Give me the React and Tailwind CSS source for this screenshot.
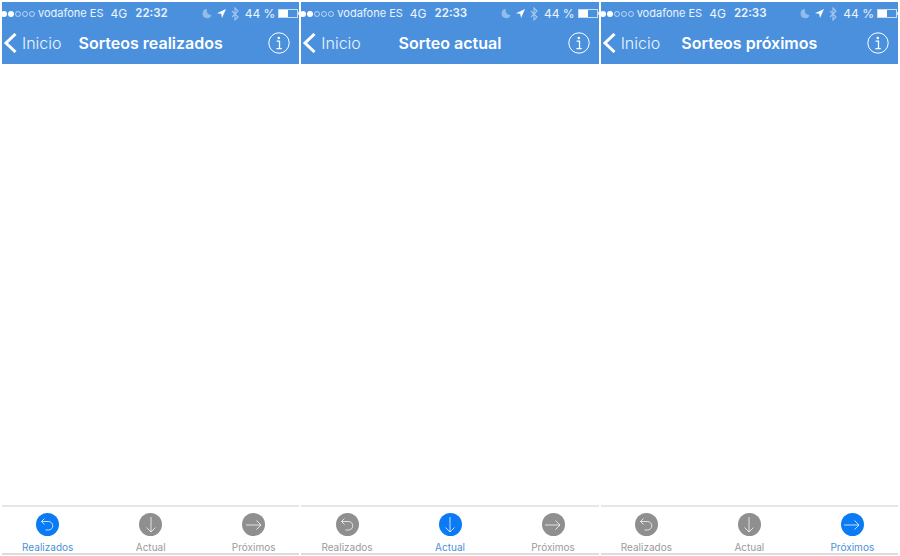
import { useState } from 'react';

const PANELS = [
  { title: 'Sorteos realizados', time: '22:32', active: 'Realizados' },
  { title: 'Sorteo actual', time: '22:33', active: 'Actual' },
  { title: 'Sorteos próximos', time: '22:33', active: 'Próximos' },
];

function Dots() {
  return (
    <div className="flex items-center gap-[1px] -ml-[1px]">
      {[true, true, false, false, false].map((filled, i) => (
        <span
          key={i}
          className={
            filled
              ? 'h-[6px] w-[6px] rounded-full bg-white'
              : 'h-[6px] w-[6px] rounded-full border border-white/60'
          }
        />
      ))}
    </div>
  );
}

function StatusBar({ time }) {
  return (
    <div className="flex h-[22px] items-center justify-between pt-[1px] text-white/90">
      <div className="flex items-center text-[11px]">
        <Dots />
        <span className="ml-[3px] whitespace-nowrap">vodafone ES</span>
        <span className="ml-[7px] text-[12px]">4G</span>
        <span className="ml-[8px] text-[11.5px] font-semibold">{time}</span>
      </div>
      <div className="flex items-center text-[12px]">
        <svg width="10" height="11" viewBox="0 0 10 11" className="opacity-40">
          <path d="M5 1a4.6 4.6 0 1 0 4.5 6A4.4 4.4 0 0 1 5 1z" fill="white" />
        </svg>
        <svg width="9" height="9" viewBox="0 0 9 9" className="ml-[5px]">
          <path d="M9 0 0 4.2l4.2.6L5 9z" fill="white" />
        </svg>
        <svg width="8" height="14" viewBox="0 0 8 14" className="ml-[5px] opacity-50">
          <path d="M1 4l6 6-3 3V1l3 3-6 6" fill="none" stroke="white" strokeWidth="1.1" />
        </svg>
        <span className="ml-[6px] whitespace-nowrap">44 %</span>
        <div className="ml-[3px] flex h-[9px] w-[20px] border border-white/70">
          <div className="h-full w-[9px] bg-white" />
        </div>
        <div className="h-[3px] w-[1px] bg-white/70" />
      </div>
    </div>
  );
}

function NavBar({ title }) {
  return (
    <div className="grid h-[40px] grid-cols-[1fr_auto_1fr] items-center pb-[3px]">
      <div className="flex items-center text-white">
        <svg width="15" height="20" viewBox="0 0 15 20" className="ml-[1px]">
          <path d="M12.5 1 3 10l9.5 9" fill="none" stroke="white" strokeWidth="3" />
        </svg>
        <span className="ml-[4px] text-[16px] font-light text-white/90">Inicio</span>
      </div>
      <span className="text-[16px] font-semibold text-white">{title}</span>
      <div className="flex justify-end pr-[9px]">
        <svg width="22" height="22" viewBox="0 0 22 22">
          <circle cx="11" cy="11" r="10.2" fill="none" stroke="white" strokeWidth="1" />
          <circle cx="10.8" cy="6" r="1.3" fill="white" />
          <path d="M8.6 9.2h2.9v7.2M8.4 16.6h5.4" fill="none" stroke="white" strokeWidth="1.3" />
        </svg>
      </div>
    </div>
  );
}

function TabIcon({ name }) {
  if (name === 'Realizados') {
    return (
      <svg width="15" height="15" viewBox="0 0 15 15">
        <path
          d="M4.5 1.5 1.5 4.5l3 3M1.5 4.5h7a4.2 4.2 0 0 1 0 8.5H5.5"
          fill="none"
          stroke="white"
          strokeOpacity="0.75"
          strokeWidth="1"
        />
      </svg>
    );
  }
  if (name === 'Actual') {
    return (
      <svg width="14" height="18" viewBox="0 0 14 18">
        <path
          d="M7 1v15M2.5 11.5 7 16l4.5-4.5"
          fill="none"
          stroke="white"
          strokeOpacity="0.75"
          strokeWidth="1"
        />
      </svg>
    );
  }
  return (
    <svg width="18" height="14" viewBox="0 0 18 14">
      <path
        d="M1 7h15M11.5 2.5 16 7l-4.5 4.5"
        fill="none"
        stroke="white"
        strokeOpacity="0.75"
        strokeWidth="1"
      />
    </svg>
  );
}

function TabBar({ active }) {
  return (
    <div className="border-y-2 border-y-[#e6e6e6] border-b-[#dcdcdc]">
      <div className="grid h-[46px] grid-cols-[repeat(3,103px)] justify-center">
        {['Realizados', 'Actual', 'Próximos'].map((name) => (
          <div key={name} className="flex flex-col items-center pt-[6px]">
            <div
              className={
                name === active
                  ? 'flex h-[23px] w-[23px] items-center justify-center rounded-full bg-[#0a7bf5]'
                  : 'flex h-[23px] w-[23px] items-center justify-center rounded-full bg-[#8f8f8f]'
              }
            >
              <TabIcon name={name} />
            </div>
            <span
              className={
                name === active
                  ? 'mt-[5px] text-[10px] leading-[13px] text-[#4a90d9]'
                  : 'mt-[5px] text-[10px] leading-[13px] text-[#9a9a9a]'
              }
            >
              {name}
            </span>
          </div>
        ))}
      </div>
    </div>
  );
}

export default function App() {
  const [panels] = useState(PANELS);

  return (
    <div className="grid h-[556px] w-[900px] grid-cols-3 gap-x-[2px] bg-white px-[2px] pt-[2px] pb-[1px] font-['Inter','Liberation_Sans',sans-serif]">
      {panels.map((p) => (
        <div key={p.title} className="flex min-w-0 flex-col overflow-hidden">
          <div className="bg-[#4a90dd]">
            <StatusBar time={p.time} />
            <NavBar title={p.title} />
          </div>
          <div className="flex-1 bg-white" />
          <TabBar active={p.active} />
        </div>
      ))}
    </div>
  );
}
